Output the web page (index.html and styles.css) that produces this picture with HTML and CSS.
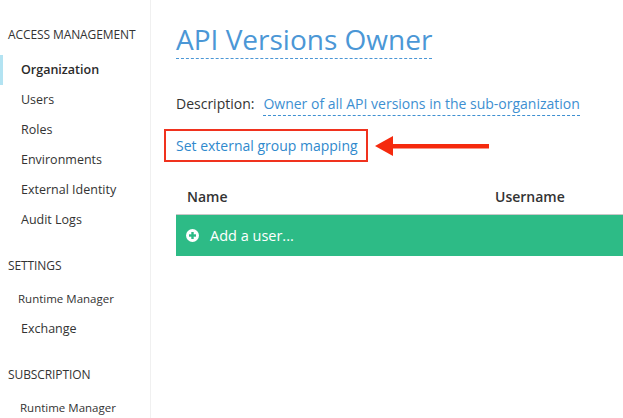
FILE: index.html
```html
<!DOCTYPE html>
<html>
<head>
<meta charset="utf-8">
<link rel="stylesheet" href="styles.css">
</head>
<body>
<div class="page">
  <aside class="sidebar">
    <div class="section-title first">ACCESS MANAGEMENT</div>
    <a class="nav-item active">Organization</a>
    <a class="nav-item">Users</a>
    <a class="nav-item">Roles</a>
    <a class="nav-item">Environments</a>
    <a class="nav-item">External Identity</a>
    <a class="nav-item">Audit Logs</a>
    <div class="section-title">SETTINGS</div>
    <a class="nav-item small">Runtime Manager</a>
    <a class="nav-item">Exchange</a>
    <div class="section-title">SUBSCRIPTION</div>
    <a class="nav-item small sub">Runtime Manager</a>
  </aside>
  <main class="main">
    <h1 class="title"><span class="editable">API Versions Owner</span></h1>
    <div class="desc">
      <span class="desc-label">Description:</span>
      <span class="desc-value editable">Owner of all API versions in the sub-organization</span>
    </div>
    <div class="mapping-row">
      <a class="mapping-link">Set external group mapping</a>
      <svg class="arrow" width="118" height="24" viewBox="0 0 118 24">
        <polygon points="0,12 18,2 18,22" fill="#f52a0e"/>
        <rect x="16" y="10" width="98" height="4.5" fill="#f52a0e"/>
      </svg>
    </div>
    <div class="table">
      <div class="table-head">
        <div class="col-name">Name</div>
        <div class="col-user">Username</div>
      </div>
      <div class="add-row">
        <svg class="plus" width="13" height="13" viewBox="0 0 13 13">
          <circle cx="6.5" cy="6.5" r="6.5" fill="#fff"/>
          <rect x="3" y="5.3" width="7" height="2.4" fill="#2dbb86"/>
          <rect x="5.3" y="3" width="2.4" height="7" fill="#2dbb86"/>
        </svg>
        <span>Add a user...</span>
      </div>
    </div>
  </main>
</div>
</body>
</html>
```
FILE: styles.css
```css
* { box-sizing: border-box; }
html, body { margin: 0; padding: 0; background: #fff; }
body {
  font-family: "Open Sans", "DejaVu Sans", sans-serif;
  color: #333;
  width: 623px;
  height: 418px;
  overflow: hidden;
}
.page { display: flex; height: 418px; }
.sidebar {
  width: 151px;
  flex: none;
  border-right: 1px solid #f0f0f0;
  padding-top: 27px;
  display: flex;
  flex-direction: column;
}
.section-title {
  font-size: 12px;
  line-height: 15px;
  height: 15px;
  padding-left: 8px;
  color: #333;
  margin-top: 23px;
  margin-bottom: 11px;
  letter-spacing: -0.1px;
}
.section-title.first { margin-top: 0; margin-bottom: 13px; }
.nav-item {
  display: block;
  height: 30px;
  line-height: 30px;
  font-size: 12.5px;
  padding-left: 18px;
  color: #333;
  border-left: 3px solid transparent;
}
.nav-item.active {
  border-left-color: #b3e3f2;
  font-weight: 600;
  font-size: 12.5px;
  color: #2a2a2a;
}
.nav-item.small { font-size: 11.5px; padding-left: 15px; }
.nav-item.small.sub { padding-left: 17px; }

.main {
  flex: 1;
  padding-left: 25px;
  padding-top: 21px;
  min-width: 0;
}
.title {
  margin: 0;
  font-weight: 400;
  font-size: 28px;
  line-height: 37px;
  color: #4b97d6;
}
.editable { border-bottom: 1px dashed #4b97d6; padding-bottom: 1px; }
.title .editable { padding-bottom: 0; }
.desc {
  margin-top: 36px;
  font-size: 14px;
  line-height: 20px;
  display: flex;
  gap: 9px;
}
.desc-label { color: #333; }
.desc-value { color: #3d8fd1; border-bottom-color: #3d8fd1; }
.mapping-row {
  margin-top: 13px;
  display: flex;
  align-items: center;
  margin-left: -12px;
}
.mapping-link {
  display: block;
  border: 2px solid #f0321e;
  height: 33px;
  line-height: 29px;
  padding: 0 8px 0 10px;
  font-size: 14px;
  color: #2f89cd;
}
.arrow { margin-left: 7px; }
.table { margin-top: 21px; }
.table-head {
  display: flex;
  height: 32px;
  padding-bottom: 5px;
  align-items: center;
  font-size: 14px;
  font-weight: 600;
  color: #333;
  border-bottom: 1px solid #c8c8c8;
}
.col-name { width: 319px; padding-left: 11px; }
.col-user { flex: 1; }
.add-row {
  height: 41px;
  background: #2dbb86;
  display: flex;
  align-items: center;
  padding-left: 10px;
  color: #fff;
  font-size: 14.5px;
}
.plus { margin-right: 11px; }
```
